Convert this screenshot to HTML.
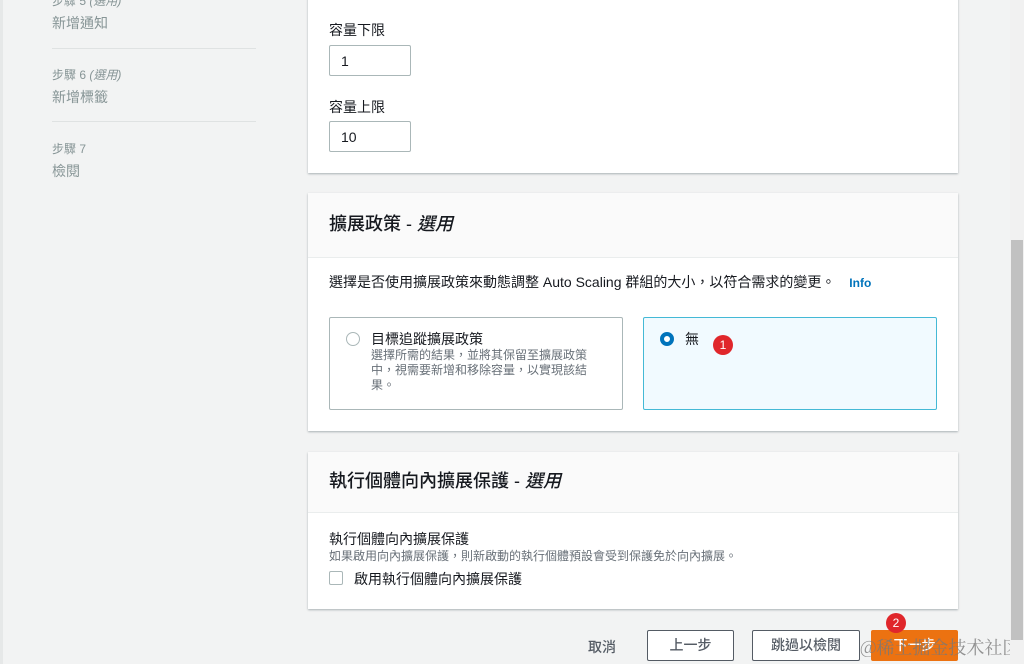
<!DOCTYPE html>
<html><head><meta charset="utf-8"><style>
*{margin:0;padding:0;box-sizing:border-box}
body{width:1024px;height:664px;overflow:hidden;background:#f2f3f3;font-family:"Liberation Sans","Noto Sans CJK TC",sans-serif;color:#16191f;position:relative}
.abs{position:absolute}
.side{left:52px;width:204px}
.side .s{font-size:12px;color:#879596}
.side .t{font-size:14px;color:#879596;margin-top:4px}
.hr{left:52px;width:204px;height:1px;background:#dfe2e2}
.card{position:absolute;left:308px;width:650px;background:#fff;box-shadow:0 1px 2px rgba(0,28,36,.3);}
.hd{background:#fafafa;border-bottom:1px solid #eaeded;font-size:18px;font-weight:500;padding-left:21px}
.inp{position:absolute;left:329px;width:82px;height:31px;border:1px solid #aab7b8;border-radius:2px;font-size:14px;padding:7px 11px}
.lbl{position:absolute;left:329px;font-size:14px}
.opt{position:absolute;top:317px;height:93px;border:1px solid #aab7b8;border-radius:2px}
.btn{position:absolute;top:630px;height:31px;border:1px solid #545b64;border-radius:2px;background:#fff;font-size:14px;font-weight:500;color:#545b64;text-align:center;line-height:29px}
.badge{position:absolute;width:20px;height:20px;border-radius:50%;background:#e0262b;color:#fff;font-size:12px;text-align:center;line-height:20px}
</style></head><body>
<div class="abs" style="left:0;top:0;width:3px;height:664px;background:#e6e8e8"></div>
<div class="abs side" style="top:-8px"><div class="s">步驟 5 <i>(選用)</i></div><div class="t">新增通知</div></div>
<div class="abs hr" style="top:48px"></div>
<div class="abs side" style="top:66px"><div class="s">步驟 6 <i>(選用)</i></div><div class="t">新增標籤</div></div>
<div class="abs hr" style="top:121px"></div>
<div class="abs side" style="top:140px"><div class="s">步驟 7</div><div class="t">檢閱</div></div>

<div class="card" style="top:-5px;height:178px"></div>
<div class="lbl" style="top:20px">容量下限</div>
<div class="inp" style="top:45px">1</div>
<div class="lbl" style="top:97px">容量上限</div>
<div class="inp" style="top:121px">10</div>

<div class="card" style="top:193px;height:238px">
<div class="hd" style="height:65px;line-height:62px">擴展政策 - <i>選用</i></div>
</div>
<div class="abs" style="left:329px;top:272px;font-size:14px">選擇是否使用擴展政策來動態調整 Auto Scaling 群組的大小，以符合需求的變更。 <b style="color:#0073bb;font-size:12px;margin-left:10px">Info</b></div>
<div class="opt" style="left:329px;width:294px;background:#fff">
<div class="abs" style="left:16px;top:14px;width:14px;height:14px;border:1px solid #aab7b8;border-radius:50%"></div>
<div class="abs" style="left:41px;top:11px;font-size:14px">目標追蹤擴展政策</div>
<div class="abs" style="left:41px;top:30px;width:225px;font-size:12px;line-height:15px;color:#687078">選擇所需的結果，並將其保留至擴展政策中，視需要新增和移除容量，以實現該結果。</div>
</div>
<div class="opt" style="left:643px;width:294px;background:#f1faff;border-color:#44b9d6">
<div class="abs" style="left:16px;top:14px;width:14px;height:14px;border:4px solid #0073bb;border-radius:50%;background:#fff"></div>
<div class="abs" style="left:41px;top:11px;font-size:14px">無</div>
</div>
<div class="badge" style="left:713px;top:335px">1</div>

<div class="card" style="top:452px;height:157px">
<div class="hd" style="height:61px;line-height:58px">執行個體向內擴展保護 - <i>選用</i></div>
</div>
<div class="abs" style="left:329px;top:529px;font-size:14px">執行個體向內擴展保護</div>
<div class="abs" style="left:329px;top:547px;font-size:12px;color:#687078">如果啟用向內擴展保護，則新啟動的執行個體預設會受到保護免於向內擴展。</div>
<div class="abs" style="left:329px;top:571px;width:14px;height:14px;border:1px solid #aab7b8;border-radius:2px"></div>
<div class="abs" style="left:354px;top:569px;font-size:14px">啟用執行個體向內擴展保護</div>

<div class="abs" style="left:588px;top:637px;font-size:14px;font-weight:500;color:#545b64">取消</div>
<div class="btn" style="left:647px;width:87px">上一步</div>
<div class="btn" style="left:752px;width:108px">跳過以檢閱</div>
<div class="btn" style="left:871px;width:87px;background:#ec7211;border-color:#ec7211;color:#fff">下一步</div>
<div class="badge" style="left:886px;top:613px">2</div>
<div class="abs" style="left:860px;top:634px;font-size:18px;color:rgba(120,120,120,.8);font-family:'Noto Serif CJK SC',serif">@稀土掘金技术社区</div>

<div class="abs" style="left:1010px;top:0;width:14px;height:664px;background:#f1f1f1"></div>
<div class="abs" style="left:1011px;top:240px;width:12px;height:400px;background:#c1c1c1"></div>
</body></html>
